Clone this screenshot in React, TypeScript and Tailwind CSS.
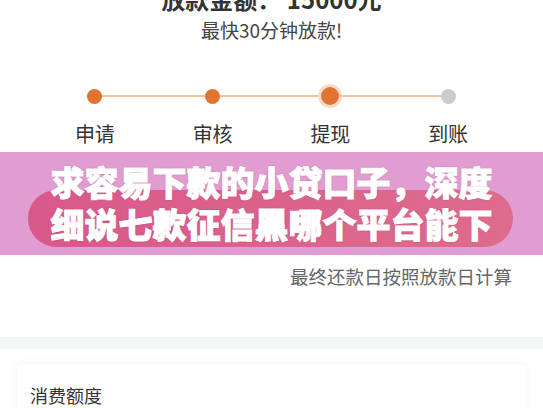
import React from "react";

const steps = [
    { label: "申请", state: "done" },
    { label: "审核", state: "done" },
    { label: "提现", state: "active" },
    { label: "到账", state: "todo" },
];

function Step({ label, state, first, last }: { label: string; state: string; first: boolean; last: boolean }) {
    return (
        <div className="flex flex-col items-center">
            <div className="flex h-[24px] w-full items-center">
                <div className={first ? "h-[2px] flex-1" : "h-[2px] flex-1 bg-[#f3c29c]"}></div>
                {state === "active" ? (
                    <div className="h-[18px] w-[18px] rounded-full bg-[#e07430] ring-[3px] ring-[#fadcc6]"></div>
                ) : state === "done" ? (
                    <div className="h-[15px] w-[15px] rounded-full bg-[#e07430]"></div>
                ) : (
                    <div className="h-[15px] w-[15px] rounded-full bg-[#cccccc]"></div>
                )}
                <div className={last ? "h-[2px] flex-1" : "h-[2px] flex-1 bg-[#f3c29c]"}></div>
            </div>
            <div className="mt-[12px] text-[20px] leading-[28px] text-[#333]">{label}</div>
        </div>
    );
}

export default function App() {
    return (
        <div
            className="h-[408px] w-[543px] overflow-hidden bg-white"
            style={{ fontFamily: '"Noto Sans CJK SC", "Noto Sans", sans-serif' }}
        >
            <div className="mt-[-21px] text-center text-[24px] font-bold leading-[40px] text-[#333]">
                放款金额： 15000元
            </div>
            <div className="text-center text-[19px] leading-[22px] text-[#444]">最快30分钟放款!</div>

            <div className="mx-[36px] mt-[43px] grid grid-cols-4">
                {steps.map((s, i) => (
                    <Step key={s.label} label={s.label} state={s.state} first={i === 0} last={i === steps.length - 1} />
                ))}
            </div>

            <div className="relative mt-[4px] h-[103px] bg-[#e19dd1]">
                <div className="absolute left-[28px] right-[30px] top-[38px] h-[57px] rounded-full bg-gradient-to-r from-[#d9588a] to-[#de6c8e]"></div>
                <div className="relative pt-[9px] text-center text-[34px] font-black leading-[42px] text-white [-webkit-text-stroke:1px_white] [text-shadow:0_0_2px_rgba(150,40,90,0.6)]">
                    <div>求容易下款的小贷口子，深度</div>
                    <div>细说七款征信黑哪个平台能下</div>
                </div>
            </div>

            <div className="mt-[7px] pr-[31px] text-right text-[18.5px] leading-[28px] text-[#666]">
                最终还款日按照放款日计算
            </div>

            <div className="mt-[47px] h-[12px] bg-[#f5f6f8]"></div>

            <div className="px-[17px] pt-[15px]">
                <div className="rounded-[6px] bg-white px-[13px] pt-[18px] shadow-[0_0_10px_rgba(0,0,0,0.06)]">
                    <div className="text-[18px] leading-[26px] text-[#333]">消费额度</div>
                    <div className="h-[40px]"></div>
                </div>
            </div>
        </div>
    );
}
